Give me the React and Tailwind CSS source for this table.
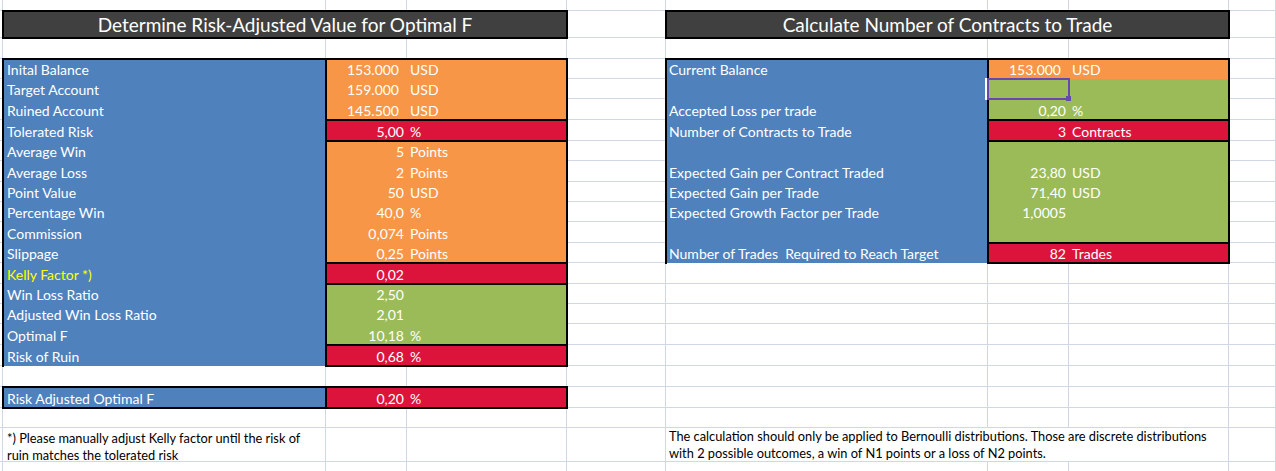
const orange = 'bg-[#f79646]'
const red = 'bg-[#dc143c]'
const green = 'bg-[#9bbb59]'

const leftRows = [
  { row: 'row-start-4', label: 'Inital Balance', num: '153.000', unit: 'USD', fill: orange, gap: true },
  { row: 'row-start-5', label: 'Target Account', num: '159.000', unit: 'USD', fill: orange, gap: true },
  { row: 'row-start-6', label: 'Ruined Account', num: '145.500', unit: 'USD', fill: orange, gap: true },
  { row: 'row-start-7', label: 'Tolerated Risk', num: '5,00', unit: '%', fill: red },
  { row: 'row-start-8', label: 'Average Win', num: '5', unit: 'Points', fill: orange },
  { row: 'row-start-9', label: 'Average Loss', num: '2', unit: 'Points', fill: orange },
  { row: 'row-start-10', label: 'Point Value', num: '50', unit: 'USD', fill: orange },
  { row: 'row-start-11', label: 'Percentage Win', num: '40,0', unit: '%', fill: orange },
  { row: 'row-start-12', label: 'Commission', num: '0,074', unit: 'Points', fill: orange },
  { row: 'row-start-13', label: 'Slippage', num: '0,25', unit: 'Points', fill: orange },
  { row: 'row-start-14', label: 'Kelly Factor *)', num: '0,02', unit: '', fill: red, yellow: true },
  { row: 'row-start-15', label: 'Win Loss Ratio', num: '2,50', unit: '', fill: green },
  { row: 'row-start-16', label: 'Adjusted Win Loss Ratio', num: '2,01', unit: '', fill: green },
  { row: 'row-start-17', label: 'Optimal F', num: '10,18', unit: '%', fill: green },
  { row: 'row-start-18', label: 'Risk of Ruin', num: '0,68', unit: '%', fill: red },
  { row: 'row-start-20', label: 'Risk Adjusted Optimal F', num: '0,20', unit: '%', fill: red },
]

const rightRows = [
  { row: 'row-start-4', label: 'Current Balance', num: '153.000', unit: 'USD', fill: orange, gap: true },
  { row: 'row-start-5', label: '', num: '', unit: '', fill: green },
  { row: 'row-start-6', label: 'Accepted Loss per trade', num: '0,20', unit: '%', fill: green },
  { row: 'row-start-7', label: 'Number of Contracts to Trade', num: '3', unit: 'Contracts', fill: red },
  { row: 'row-start-8', label: '', num: '', unit: '', fill: green },
  { row: 'row-start-9', label: 'Expected Gain per Contract Traded', num: '23,80', unit: 'USD', fill: green },
  { row: 'row-start-10', label: 'Expected Gain per Trade', num: '71,40', unit: 'USD', fill: green },
  { row: 'row-start-11', label: 'Expected Growth Factor per Trade', num: '1,0005', unit: '', fill: green },
  { row: 'row-start-12', label: '', num: '', unit: '', fill: green },
  { row: 'row-start-13', label: 'Number of Trades  Required to Reach Target', num: '82', unit: 'Trades', fill: red },
]

// thick black outlines drawn over the filled cells
const outlines = [
  'col-start-2 row-start-4 row-span-15 border-l-2 border-t-2',
  'col-start-3 col-span-2 row-start-4 row-span-3 border-2',
  'col-start-3 col-span-2 row-start-7 border-2',
  'col-start-3 col-span-2 row-start-8 row-span-6 border-2',
  'col-start-3 col-span-2 row-start-14 border-2',
  'col-start-3 col-span-2 row-start-15 row-span-3 border-2',
  'col-start-3 col-span-2 row-start-18 border-2',
  'col-start-2 row-start-20 border-l-2 border-t-2 border-b-2',
  'col-start-3 col-span-2 row-start-20 border-2',
  'col-start-6 row-start-4 row-span-10 border-l-2 border-t-2',
  'col-start-7 col-span-2 row-start-4 row-span-3 border-2',
  'col-start-7 col-span-2 row-start-7 border-2',
  'col-start-7 col-span-2 row-start-8 row-span-5 border-2',
  'col-start-7 col-span-2 row-start-13 border-2',
]

const cols = 'grid-cols-[3px_323px_81px_160px_99px_322px_81px_160px_47px]'
const rows =
  'grid-rows-[11px_27px_21px_20px_20px_21px_21px_20px_21px_20px_20px_21px_20px_21px_20px_20px_21px_21px_21px_21px_20px_34px_20px]'

function ValueCell({ r, col }) {
  return (
    <div className={`${r.row} ${col} col-span-2 ${r.fill} flex items-end pb-px leading-[16px] text-white`}>
      <span className={`w-[81px] shrink-0 text-right ${r.gap ? 'pr-[8px]' : 'pr-[3px]'}`}>{r.num}</span>
      <span className="pl-[3px]">{r.unit}</span>
    </div>
  )
}

export default function App() {
  return (
    <div className="grid w-[1276px] h-[471px] overflow-hidden bg-white font-[Lato,sans-serif] text-[14px]">
      {/* sheet gridlines */}
      <div className={`col-start-1 row-start-1 grid ${cols} ${rows}`}>
        {Array.from({ length: 23 * 9 }).map((_, i) => (
          <div key={i} className="border-r border-b border-[#d0d7e5]" />
        ))}
      </div>

      <div className={`col-start-1 row-start-1 grid ${cols} ${rows}`}>
        <div className="col-start-2 col-span-3 row-start-2 -m-px border-2 border-black bg-[#404040] flex items-end justify-center pb-[2px] text-[19px] leading-[20px] text-white">
          Determine Risk-Adjusted Value for Optimal F
        </div>
        <div className="col-start-6 col-span-3 row-start-2 -m-px border-2 border-black bg-[#404040] flex items-end justify-center pb-[2px] text-[19px] leading-[20px] text-white">
          Calculate Number of Contracts to Trade
        </div>

        {leftRows.map((r) => (
          <div
            key={'l' + r.row}
            className={`${r.row} col-start-2 bg-[#4f81bd] flex items-end pl-[4px] pb-px leading-[16px] whitespace-pre ${r.yellow ? 'text-[#ffff00]' : 'text-white'}`}
          >
            {r.label}
          </div>
        ))}
        {leftRows.map((r) => (
          <ValueCell key={'lv' + r.row} r={r} col="col-start-3" />
        ))}

        {rightRows.map((r) => (
          <div
            key={'r' + r.row}
            className={`${r.row} col-start-6 bg-[#4f81bd] flex items-end pl-[3px] pb-px leading-[16px] whitespace-pre text-white`}
          >
            {r.label}
          </div>
        ))}
        {rightRows.map((r) => (
          <ValueCell key={'rv' + r.row} r={r} col="col-start-7" />
        ))}

        {outlines.map((o) => (
          <div key={o} className={`${o} -m-px border-black`} />
        ))}

        {/* selected cell */}
        <div className="col-start-7 row-start-5 -m-px relative border-2 border-[#6847b0] shadow-[-2px_0_0_0_#fff]">
          <div className="absolute -right-[3px] -bottom-[3px] w-[5px] h-[5px] bg-[#6847b0]" />
        </div>

        <div className="col-start-2 row-start-22 flex items-end pl-[4px] text-[12.8px] leading-[17px] text-black whitespace-nowrap">
          <div className="-mb-[2px]">
            *) Please manually adjust Kelly factor until the risk of
            <br />
            ruin matches the tolerated risk
          </div>
        </div>
        <div className="col-start-6 col-span-3 row-start-22 bg-white border-r border-b border-[#d0d7e5] flex items-end pl-[3px] text-[12.8px] leading-[17px] text-black whitespace-nowrap">
          <div className="-mb-[1px]">
            The calculation should only be applied to Bernoulli distributions. Those are discrete distributions
            <br />
            with 2 possible outcomes, a win of N1 points or a loss of N2 points.
          </div>
        </div>
      </div>
    </div>
  )
}
